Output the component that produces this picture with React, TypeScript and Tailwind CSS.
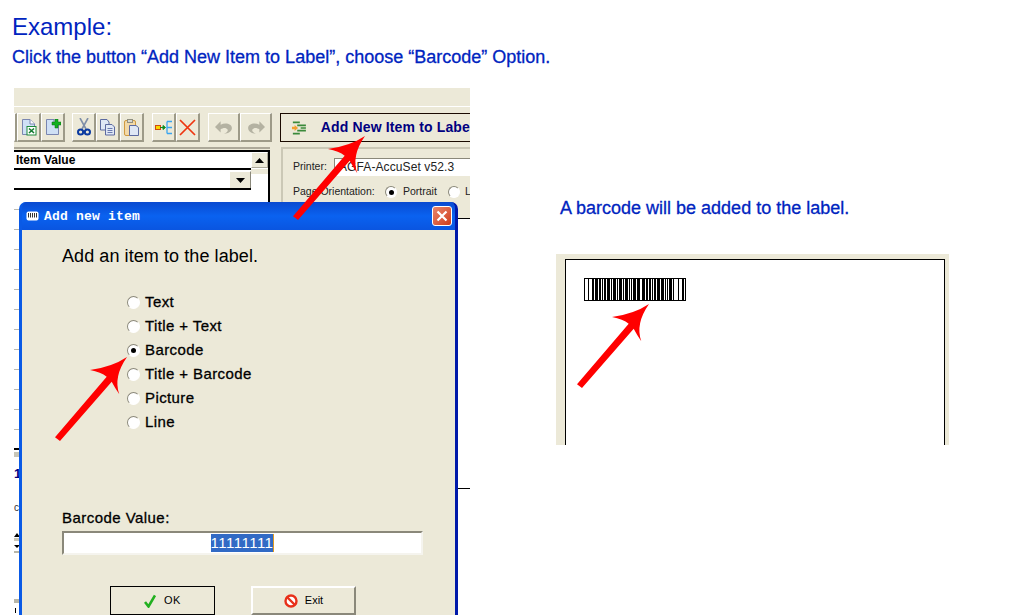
import React from "react";

const TEXT_STROKE = "[-webkit-text-stroke:0.3px_currentColor]";

function Arrow({ className }: { className: string }) {
  return (
    <svg className={className} width="82" height="90" viewBox="0 0 82 90">
      <path
        d="M76 2 Q61 12 39 15 Q50 17 55.7 21.7 L4 82.3 L9 86 L60.7 26.7 Q64 33 68.3 39.3 Q62 22 76 2 Z"
        fill="#ff0000"
      />
    </svg>
  );
}

function ToolBtn({ w = "w-[24px]", children }: { w?: string; children?: React.ReactNode }) {
  return (
    <div
      className={`${w} h-[29px] shrink-0 flex items-center justify-center bg-[#ece9d8] border-t border-l border-white border-r-2 border-b-2 border-r-[#9d9a88] border-b-[#9d9a88]`}
    >
      {children}
    </div>
  );
}

const Doc = ({ children }: { children?: React.ReactNode }) => (
  <svg width="16" height="17" viewBox="0 0 16 17">
    <path d="M1.5 .5H9L13.5 5V15.5H1.5Z" fill="#cfe0f5" stroke="#7a86b0" />
    <path d="M9 .5V5H13.5" fill="#fff" stroke="#7a86b0" />
    {children}
  </svg>
);

const ExcelIcon = () => (
  <Doc>
    <rect x="6" y="7.5" width="9" height="8.5" fill="#fff" stroke="#1d8a3a" />
    <path d="M8 9.5L13 14M13 9.5L8 14" stroke="#127a2e" strokeWidth="1.6" />
  </Doc>
);
const NewIcon = () => (
  <Doc>
    <path d="M10 0H13V3H16V6H13V9H10V6H7V3H10Z" fill="#12b020" stroke="#0a6a12" strokeWidth=".5" />
  </Doc>
);
const CutIcon = () => (
  <svg width="14" height="18" viewBox="0 0 14 18">
    <path d="M3 0L9 11M11 0L5 11" stroke="#7f8fa8" strokeWidth="1.6" />
    <circle cx="3.6" cy="14" r="2.6" fill="none" stroke="#0a3aa0" strokeWidth="2" />
    <circle cx="10.4" cy="14" r="2.6" fill="none" stroke="#0a3aa0" strokeWidth="2" />
  </svg>
);
const CopyIcon = () => (
  <svg width="16" height="17" viewBox="0 0 16 17">
    <path d="M.5 .5H7L9 3V11H.5Z" fill="#dfe7f5" stroke="#5c6aa0" />
    <path d="M5.5 5.5H12L14.5 8V16H5.5Z" fill="#dfe7f5" stroke="#5c6aa0" />
    <path d="M7.5 9.5H12.5M7.5 11.5H12.5M7.5 13.5H12.5" stroke="#6a7ab0" />
  </svg>
);
const PasteIcon = () => (
  <svg width="15" height="17" viewBox="0 0 15 17">
    <rect x=".5" y="1.5" width="11" height="15" rx="1.5" fill="#f2d9a8" stroke="#d09a40" />
    <rect x="3.5" y=".5" width="5" height="3" fill="#d8d8d0" stroke="#908f80" />
    <path d="M5.5 6.5H12L14.5 8.5V16.5H5.5Z" fill="#dfe7f5" stroke="#5c6aa0" />
  </svg>
);
const TreeIcon = () => (
  <svg width="18" height="15" viewBox="0 0 18 15">
    <rect x=".5" y="5.5" width="5" height="4" fill="#f8d800" stroke="#d04a10" />
    <path d="M5 7.5H10M8 5.5L10.5 7.5L8 9.5Z" fill="#0f8a1e" stroke="#0f8a1e" />
    <path d="M12 1.5V13.5M12 1.5H17M12 7.5H17M12 13.5H17" fill="none" stroke="#39a5f0" strokeWidth="1.3" />
  </svg>
);
const XIcon = () => (
  <svg width="17" height="17" viewBox="0 0 17 17">
    <path d="M1 1L16 16M16 1L1 16" stroke="#ee3510" strokeWidth="1.7" />
  </svg>
);
const UndoIcon = ({ flip = false }: { flip?: boolean }) => (
  <svg width="18" height="15" viewBox="0 0 16 13" className={flip ? "-scale-x-100" : ""}>
    <path
      d="M5 1V4C9 2 15 3 15 7C15 10 12 12 8 12C11 11 12 9 11 8C9 6 7 7 5 8V11L0 6Z"
      fill="#b4b2a2"
    />
  </svg>
);
const AddItemIcon = () => (
  <svg width="17" height="16" viewBox="0 0 17 16">
    <path d="M1 1.5H9M6 5H16M10 8H16M6 11H16M1 14.5H9" stroke="#3a8a3a" strokeWidth="2" />
    <path d="M0 6.5H3V4.5L7 8L3 11.5V9.5H0Z" fill="#f0a030" />
  </svg>
);

function Radio({ checked = false, size = "w-[13px] h-[13px]" }: { checked?: boolean; size?: string }) {
  return (
    <span
      className={`${size} shrink-0 rounded-full bg-white flex items-center justify-center border border-t-[#8a887a] border-l-[#8a887a] border-r-white border-b-white`}
    >
      {checked && <span className="w-[5px] h-[5px] rounded-full bg-black" />}
    </span>
  );
}

const OPTIONS = ["Text", "Title + Text", "Barcode", "Title + Barcode", "Picture", "Line"];

const BARS = [
  1, 3, 1, 3, 2, 1, 3, 1, 2, 1, 1, 1, 2, 1, 3, 1, 1, 1, 3, 1, 1, 1, 3, 1, 1, 1, 3, 1, 1, 1, 1, 1, 3, 1, 3, 2, 3, 1, 2, 1,
  2, 1, 1, 1, 2, 1, 3, 1, 3, 1, 1, 1, 1, 1, 3, 1, 1, 4, 1, 3, 2, 1, 2,
];

function Barcode() {
  let x = 0;
  const rects: React.ReactNode[] = [];
  BARS.forEach((w, i) => {
    if (i % 2 === 0) rects.push(<rect key={i} x={x} y="0" width={w} height="23" fill="#000" />);
    x += w;
  });
  return (
    <svg width="102" height="23" viewBox="0 0 102 23" className="block">
      <rect x="0" y="0" width="102" height="23" fill="#fff" />
      {rects}
      <rect x="0" y="0" width="102" height="1" fill="#000" />
      <rect x="0" y="22" width="102" height="1" fill="#000" />
    </svg>
  );
}

function Dialog() {
  return (
    <div className="absolute left-[5px] top-[114px] bottom-0 w-[439px] flex flex-col rounded-t-[7px] overflow-hidden bg-[#0a5ae6] border-l-[3px] border-l-[#0a5ae6] border-r-[3px] border-r-[#0019aa]">
      <div className="h-[28px] shrink-0 flex items-center pl-[4px] pr-[3px] bg-linear-to-b from-[#0a4ad0] via-[#0a62f0] to-[#0a55e0]">
        <svg width="13" height="10" viewBox="0 0 13 10" className="shrink-0">
          <rect x=".5" y=".5" width="12" height="9" rx="2" fill="#fff" />
          <path d="M2.5 2V6.5M4.5 2V6.5M6.5 2V6.5M8.5 2V6.5M10.5 2V6.5" stroke="#333" />
        </svg>
        <span className="ml-[5px] font-['Liberation_Mono',monospace] font-bold text-[13px] tracking-[0.2px] text-white leading-none">
          Add new item
        </span>
        <div className="ml-auto w-[20px] h-[20px] rounded-[3px] border border-white bg-linear-to-br from-[#e8846a] to-[#d03a14] flex items-center justify-center">
          <svg width="12" height="12" viewBox="0 0 12 12">
            <path d="M1.5 1.5L10.5 10.5M10.5 1.5L1.5 10.5" stroke="#fff" strokeWidth="2.2" />
          </svg>
        </div>
      </div>
      <div className="flex-1 bg-[#ece9d8] pl-[40px] pt-[16px] text-black">
        <div className="text-[18px] leading-[20px] tracking-[0.08px]">Add an item to the label.</div>
        <div className="mt-[24px] ml-[65px] flex flex-col">
          {OPTIONS.map((o, i) => (
            <div key={o} className="h-[24px] flex items-center gap-[5px]">
              <Radio checked={i === 2} />
              <span className={`text-[15px] tracking-[0.4px] ${TEXT_STROKE}`}>{o}</span>
            </div>
          ))}
        </div>
        <div className={`mt-[76px] text-[15px] leading-[16px] tracking-[0.45px] ${TEXT_STROKE}`}>Barcode Value:</div>
        <div className="mt-[5px] h-[24px] w-[361px] bg-white flex justify-center border-t-2 border-l-2 border-t-[#8a887a] border-l-[#8a887a] border-r-2 border-b-2 border-r-[#f5f4ee] border-b-[#f5f4ee]">
          <span className="h-[18px] mt-[1px] bg-[#316ac5] text-white text-[15px] leading-[18px] tracking-[0.5px] border-r border-r-[#e09a20]">
            11111111
          </span>
        </div>
        <div className="mt-[31px] ml-[48px] flex gap-[36px]">
          <div className="w-[105px] h-[29px] border border-black bg-[#ece9d8] flex items-center justify-center gap-[8px] text-[11px] tracking-[0.5px]">
            <svg width="12" height="14" viewBox="0 0 12 14">
              <path d="M1 8L4.5 12.5L11 1.5" fill="none" stroke="#22b020" strokeWidth="2.6" />
            </svg>
            <span>OK</span>
          </div>
          <div className="w-[105px] h-[29px] border-t-2 border-l-2 border-white border-r-2 border-b-2 border-r-[#8a887a] border-b-[#8a887a] bg-[#ece9d8] flex items-center justify-center gap-[7px] text-[11px]">
            <svg width="14" height="14" viewBox="0 0 14 14">
              <circle cx="7" cy="7" r="5.5" fill="#fff" stroke="#e8301a" strokeWidth="2.4" />
              <path d="M3 3L11 11" stroke="#e8301a" strokeWidth="2.4" />
            </svg>
            <span>Exit</span>
          </div>
        </div>
      </div>
    </div>
  );
}

function LeftStrip() {
  return (
    <div className="flex flex-col">
      {Array.from({ length: 12 }).map((_, i) => (
        <div key={i} className="h-[20px] shrink-0 border-b border-b-[#b8b8b0]" />
      ))}
      <div className="h-[20px] shrink-0 border-b-2 border-b-black" />
      <div className="mt-[2px] h-[5px] bg-[#c8c6b8]" />
      <div className="mt-[10px] h-[14px] text-[13px] leading-[14px] font-bold text-[#000080]">1</div>
      <div className="mt-[21px] h-[12px] text-[10px] leading-[12px] text-[#333]">c</div>
      <div className="mt-[18px] h-[17px]">
        <svg width="6" height="17" viewBox="0 0 6 17" className="block">
          <path d="M0 5H6L3 1Z" fill="#000" />
          <rect x="0" y="6" width="6" height="3" fill="#c8c6b8" />
          <path d="M0 13H6L3 16Z" fill="#000" />
        </svg>
      </div>
      <div className="mt-[2px] h-[2px] bg-[#b8b6a8]" />
      <div className="mt-[46px] h-[4px] bg-[#b8b6a8]" />
      <div className="mt-[5px] ml-[1px] h-[5px] w-px bg-black" />
    </div>
  );
}

function ItemWindow() {
  return (
    <div className="relative w-[456px] h-[527px] ml-[14px] shrink-0 overflow-hidden bg-white font-['Liberation_Sans',sans-serif]">
      <div className="h-[19px] bg-[#ece9d8] border-b border-b-white" />
      <div className="h-[40px] bg-[#ece9d8] pt-[6px] flex items-start">
        <div className="flex">
          <ToolBtn w="w-[3px]" />
          <ToolBtn><ExcelIcon /></ToolBtn>
          <ToolBtn><NewIcon /></ToolBtn>
        </div>
        <div className="flex ml-[7px]">
          <ToolBtn><CutIcon /></ToolBtn>
          <ToolBtn><CopyIcon /></ToolBtn>
          <ToolBtn><PasteIcon /></ToolBtn>
        </div>
        <div className="flex ml-[8px]">
          <ToolBtn><TreeIcon /></ToolBtn>
          <ToolBtn><XIcon /></ToolBtn>
        </div>
        <div className="flex ml-[8px]">
          <ToolBtn w="w-[32px]"><UndoIcon /></ToolBtn>
          <ToolBtn w="w-[32px]"><UndoIcon flip /></ToolBtn>
        </div>
        <div className="ml-[8px] w-[190px] h-[29px] shrink-0 border border-r-0 border-[#1a0a00] bg-[#ece9d8] flex items-center pl-[11px] gap-[14px]">
          <AddItemIcon />
          <span className="font-bold text-[14px] tracking-[0.15px] text-[#000080] whitespace-nowrap">
            Add New Item to Labe
          </span>
        </div>
      </div>

      <div className="flex">
        <div className="w-[256px] shrink-0">
          <div className="h-[3px] border-t-2 border-t-[#aca899] bg-[#ece9d8]" />
          <div className="flex">
            <div className="w-[237px] shrink-0">
              <div className="h-[20px] border-t-2 border-t-black border-b-2 border-b-black bg-white pl-[2px] text-[12px] leading-[16px] font-bold text-black">
                Item Value
              </div>
              <div className="h-[20px] flex justify-end border-b-2 border-b-black">
                <div className="w-[22px] h-[17px] mt-px bg-[#ece9d8] border-t border-l border-white border-r border-r-[#8a887a] flex items-center justify-center">
                  <svg width="9" height="5" viewBox="0 0 9 5"><path d="M0 0H9L4.5 5Z" fill="#000" /></svg>
                </div>
              </div>
              <LeftStrip />
            </div>
            <div className="w-[19px] shrink-0 h-[60px] bg-white border-t-2 border-t-black border-r-2 border-r-black">
              <div className="h-[16px] bg-[#ece9d8] border-t border-l border-white border-b border-b-[#aca899] border-r border-r-[#aca899] flex items-center justify-center">
                <svg width="9" height="5" viewBox="0 0 9 5"><path d="M0 5H9L4.5 0Z" fill="#000" /></svg>
              </div>
              <div className="mt-px h-[5px] bg-[#ece9d8]" />
            </div>
          </div>
        </div>
        <div className="w-[200px] shrink-0">
          <div className="h-[72px] bg-[#ece9d8] pl-[11px] border-b border-b-black">
            <div className="h-full border-t-2 border-l-2 border-[#cbc8b6] pl-[10px] pt-[9px] text-[10.5px] text-[#222]">
              <div className="flex items-center h-[18px]">
                <span className="w-[41px] shrink-0">Printer:</span>
                <div className="flex-1 h-[18px] bg-white border-t border-l border-[#8a887a] pl-[4px] text-[12px] leading-[16px] tracking-[0.1px] whitespace-nowrap">
                  AGFA-AccuSet v52.3
                </div>
              </div>
              <div className="flex items-center h-[14px] mt-[9px] whitespace-nowrap">
                <span className="w-[92px] shrink-0">Page Orientation:</span>
                <Radio checked size="w-[12px] h-[12px]" />
                <span className="ml-[6px] w-[45px] shrink-0">Portrait</span>
                <Radio size="w-[12px] h-[12px]" />
                <span className="ml-[5px]">L</span>
              </div>
            </div>
          </div>
          <div className="mt-[269px] h-px bg-black" />
        </div>
      </div>
      <Dialog />
    </div>
  );
}

export default function App() {
  return (
    <div className="relative w-[1020px] h-[615px] overflow-hidden bg-white font-['Liberation_Sans',sans-serif] text-[#0024bf]">
      <div className="pl-[12px] pt-[13px] h-[88px]">
        <div className="text-[24px] leading-[28px]">Example:</div>
        <div className={`mt-[6px] text-[18px] leading-[20px] ${TEXT_STROKE}`}>
          Click the button “Add New Item to Label”, choose “Barcode” Option.
        </div>
      </div>
      <div className="flex items-start">
        <ItemWindow />
        <div className="ml-[86px] w-[393px] pt-[110px]">
          <div className={`pl-[4px] text-[18px] leading-[20px] ${TEXT_STROKE}`}>
            A barcode will be added to the label.
          </div>
          <div className="mt-[36px] h-[191px] bg-[#ece9d8] pl-[9px] pr-[4px] pt-[5px]">
            <div className="h-[186px] bg-white border-t border-l border-r border-black pl-[18px] pt-[18px]">
              <Barcode />
            </div>
          </div>
        </div>
      </div>
      <Arrow className="absolute left-[289px] top-[134px]" />
      <Arrow className="absolute left-[51px] top-[355px]" />
      <Arrow className="absolute left-[573px] top-[302px]" />
    </div>
  );
}
